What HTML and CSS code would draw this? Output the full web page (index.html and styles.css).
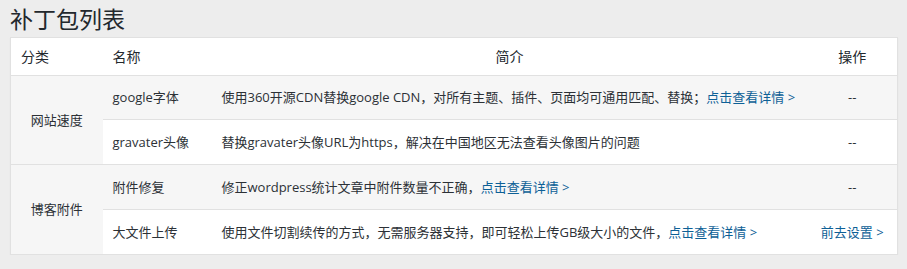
FILE: index.html
```html
<!DOCTYPE html>
<html lang="zh-CN">
<head>
<meta charset="utf-8">
<title>补丁包列表</title>
<link rel="stylesheet" href="styles.css">
</head>
<body>
<div class="wrap">
  <h1 class="page-title">补丁包列表</h1>
  <table class="patch-table">
    <colgroup>
      <col class="col-cat">
      <col class="col-name">
      <col class="col-desc">
      <col class="col-act">
    </colgroup>
    <thead>
      <tr>
        <th class="th-left">分类</th>
        <th class="th-left">名称</th>
        <th class="th-center">简介</th>
        <th class="th-center">操作</th>
      </tr>
    </thead>
    <tbody>
      <tr class="alt">
        <td class="cat" rowspan="2">网站速度</td>
        <td>google字体</td>
        <td>使用360开源CDN替换google CDN，对所有主题、插件、页面均可通用匹配、替换；<a href="#" class="link">点击查看详情 &gt;</a></td>
        <td class="act">--</td>
      </tr>
      <tr>
        <td>gravater头像</td>
        <td>替换gravater头像URL为https，解决在中国地区无法查看头像图片的问题</td>
        <td class="act">--</td>
      </tr>
      <tr class="alt group-start">
        <td class="cat" rowspan="2">博客附件</td>
        <td>附件修复</td>
        <td>修正wordpress统计文章中附件数量不正确，<a href="#" class="link">点击查看详情 &gt;</a></td>
        <td class="act">--</td>
      </tr>
      <tr>
        <td>大文件上传</td>
        <td>使用文件切割续传的方式，无需服务器支持，即可轻松上传GB级大小的文件，<a href="#" class="link">点击查看详情 &gt;</a></td>
        <td class="act"><a href="#" class="link">前去设置 &gt;</a></td>
      </tr>
    </tbody>
  </table>
</div>
</body>
</html>
```

FILE: styles.css
```css
html, body {
  margin: 0;
  padding: 0;
  background: #ededed;
}

body {
  font-family: "Open Sans", "Noto Sans CJK SC", sans-serif;
  font-size: 13px;
  color: #2c3136;
}

.wrap {
  padding: 0 9px 0 10px;
}

.page-title {
  margin: 0;
  padding: 5px 0 3px;
  font-size: 23px;
  font-weight: 400;
  line-height: 29px;
  color: #23282d;
}

.patch-table {
  width: 100%;
  border-collapse: collapse;
  background: #fff;
  border: 1px solid #e1e1e1;
  box-shadow: 0 1px 1px rgba(0, 0, 0, 0.06);
  table-layout: fixed;
}

.col-cat { width: 92px; }
.col-name { width: 109px; }
.col-act { width: 90px; }

.patch-table th {
  height: 37px;
  padding: 0 10px;
  font-weight: 400;
  font-size: 14px;
  line-height: 19px;
  color: #23282d;
  border-bottom: 1px solid #e1e1e1;
}

.th-left { text-align: left; }
.th-center { text-align: center; }

.patch-table td {
  height: 44px;
  padding: 0 10px;
  line-height: 19px;
  border-top: 1px solid #e1e1e1;
  vertical-align: middle;
  white-space: nowrap;
}

.patch-table tbody tr:first-child td {
  height: 43px;
  border-top: 0;
}

.patch-table tr.alt td {
  background: #f6f6f6;
}

.patch-table td.cat {
  background: #f6f6f6;
  text-align: center;
}

.patch-table td.act {
  text-align: center;
}

.link {
  color: #0d6096;
  text-decoration: none;
}
```
